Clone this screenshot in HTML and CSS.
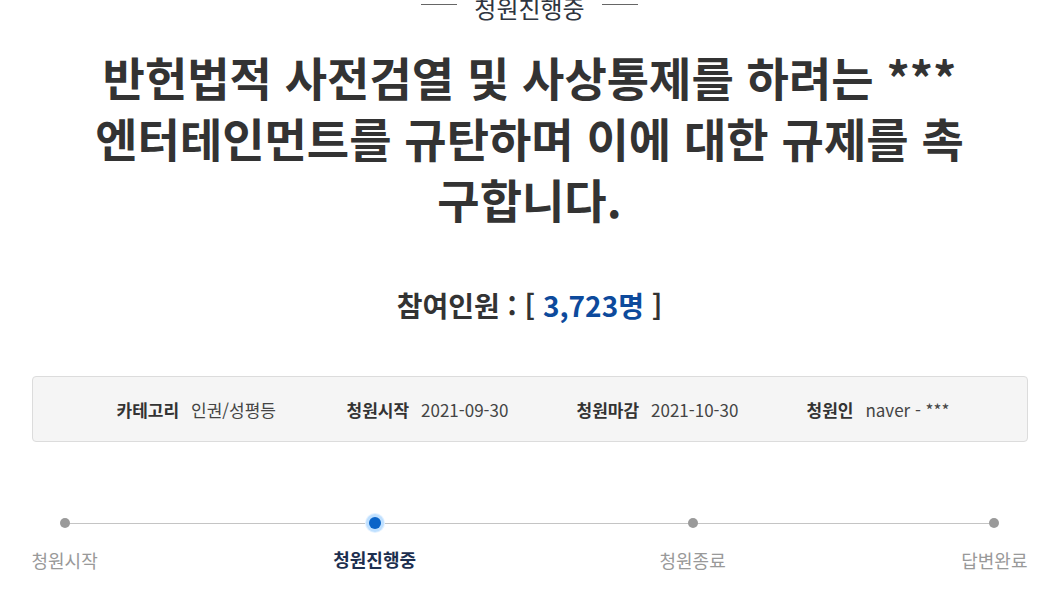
FILE: index.html
```html
<!DOCTYPE html>
<html lang="ko">
  <head>
    <meta charset="UTF-8" />
    <meta name="viewport" content="width=device-width, initial-scale=1.0" />
    <title>청원 상세</title>
    <link rel="stylesheet" href="styles.css">
  </head>
  <body>
    <div class="petition">
      <div class="status-label">
        <span class="rule"></span>
        <span>청원진행중</span>
        <span class="rule"></span>
      </div>

      <h1 class="petition-title">
        반헌법적 사전검열 및 사상통제를 하려는 *** 엔터테인먼트를 규탄하며 이에 대한 규제를 촉구합니다.
      </h1>

      <p class="count">
        참여인원 : [ <span class="count-num">3,723명</span> ]
      </p>

      <ul class="info">
        <li><strong>카테고리</strong><span>인권/성평등</span></li>
        <li><strong>청원시작</strong><span>2021-09-30</span></li>
        <li><strong>청원마감</strong><span>2021-10-30</span></li>
        <li><strong>청원인</strong><span>naver - ***</span></li>
      </ul>

      <ol class="steps">
        <li class="step"><span class="dot"></span><span class="step-name">청원시작</span></li>
        <li class="step active"><span class="dot"></span><span class="step-name">청원진행중</span></li>
        <li class="step"><span class="dot"></span><span class="step-name">청원종료</span></li>
        <li class="step"><span class="dot"></span><span class="step-name">답변완료</span></li>
      </ol>
    </div>
  </body>
</html>
```

FILE: styles.css
```css
body {
  margin: 0;
  background-color: #ffffff;
  color: #333333;
  font-family: "Noto Sans CJK KR", "Noto Sans", sans-serif;
  overflow: hidden;
}

.petition {
  width: 996px;
  margin: 0 auto;
}

.status-label {
  display: flex;
  justify-content: center;
  align-items: center;
  gap: 17px;
  margin-top: -4px;
  height: 24px;
  font-size: 24px;
  line-height: 24px;
  color: #2f3540;
}

.status-label .rule {
  width: 36px;
  height: 1px;
  margin-top: -7px;
  background-color: #666;
}

.petition-title {
  margin: 26px auto 0;
  padding: 0 45px;
  font-size: 46px;
  line-height: 61px;
  font-weight: 700;
  text-align: center;
  color: #333;
}

.count {
  margin: 58px 0 0;
  font-size: 28px;
  line-height: 36px;
  font-weight: 700;
  text-align: center;
  color: #333;
}

.count-num {
  color: #0d4a9c;
}

.info {
  display: flex;
  align-items: center;
  height: 64px;
  margin: 53px 0 0;
  padding: 0 0 0 84px;
  list-style: none;
  background-color: #f5f5f5;
  border: 1px solid #dcdcdc;
  border-radius: 4px;
  font-size: 17px;
}

.info li {
  width: 230px;
  display: flex;
  gap: 12px;
}

.info li:last-child {
  width: auto;
}

.info strong {
  font-weight: 700;
  color: #333;
}

.info span {
  color: #444;
}

.steps {
  display: flex;
  justify-content: space-between;
  margin: 69px 0 0;
  padding: 0;
  list-style: none;
  background: linear-gradient(#c4c4c4, #c4c4c4) no-repeat;
  background-size: calc(100% - 66px) 1px;
  background-position: 33px 12px;
}

.step {
  display: flex;
  flex-direction: column;
  align-items: center;
  gap: 19px;
}

.dot {
  width: 10px;
  height: 10px;
  margin-top: 7px;
  border-radius: 50%;
  background-color: #9a9a9a;
}

.step.active {
  margin-right: 8px;
}

.step.active .dot {
  width: 12px;
  height: 12px;
  margin-top: 6px;
  margin-bottom: -2px;
  background-color: #0a64c8;
  box-shadow: 0 0 0 3px #bfe0ff, 0 0 0 4px #e3f1ff;
}

.step-name {
  font-size: 18px;
  line-height: 26px;
  color: #999;
}

.step.active .step-name {
  font-weight: 700;
  color: #1d2f4f;
}
```
